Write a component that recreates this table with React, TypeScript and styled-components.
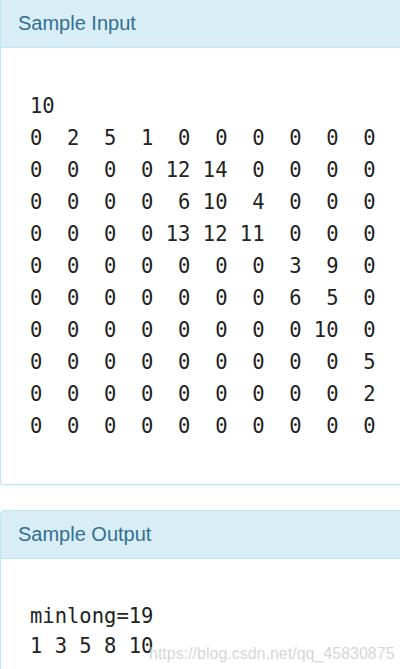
import styled, { createGlobalStyle } from 'styled-components';

const GlobalStyle = createGlobalStyle`
  html, body {
    margin: 0;
    padding: 0;
    background: #fff;
    overflow: hidden;
  }
  body {
    font-family: "Liberation Sans", Arial, sans-serif;
  }
`;

const matrix: number[][] = [
  [0, 2, 5, 1, 0, 0, 0, 0, 0, 0],
  [0, 0, 0, 0, 12, 14, 0, 0, 0, 0],
  [0, 0, 0, 0, 6, 10, 4, 0, 0, 0],
  [0, 0, 0, 0, 13, 12, 11, 0, 0, 0],
  [0, 0, 0, 0, 0, 0, 0, 3, 9, 0],
  [0, 0, 0, 0, 0, 0, 0, 6, 5, 0],
  [0, 0, 0, 0, 0, 0, 0, 0, 10, 0],
  [0, 0, 0, 0, 0, 0, 0, 0, 0, 5],
  [0, 0, 0, 0, 0, 0, 0, 0, 0, 2],
  [0, 0, 0, 0, 0, 0, 0, 0, 0, 0],
];

const formatRow = (row: number[]) =>
  row.map((n, i) => (i === 0 ? String(n) : String(n).padStart(3, ' '))).join('');

const inputLines = ['10', ...matrix.map(formatRow)];
const outputLines = ['minlong=19', '1 3 5 8 10'];

function Panel({
  title,
  lines,
  lh,
  mark,
}: {
  title: string;
  lines: string[];
  lh: number;
  mark?: boolean;
}) {
  return (
    <Card>
      <Heading>{title}</Heading>
      <Body>
        <Code $lh={lh}>{lines.join('\n')}</Code>
        {mark && <Watermark>https://blog.csdn.net/qq_45830875</Watermark>}
      </Body>
    </Card>
  );
}

function App() {
  return (
    <Page>
      <GlobalStyle />
      <Panel title='Sample Input' lines={inputLines} lh={32} />
      <Panel title='Sample Output' lines={outputLines} lh={30} mark />
    </Page>
  );
}

export default App;

const Page = styled.div`
  display: flex;
  flex-direction: column;
  gap: 25px;
  width: 400px;
  height: 100vh;
  overflow: hidden;
`;

const Card = styled.div`
  flex-shrink: 0;
  margin-right: -6px;
  background: #fff;
  border: 1px solid #bce8f1;
  border-top: none;
  border-radius: 0 0 4px 4px;
  box-shadow: 0 1px 1px rgba(0, 0, 0, 0.05);

  & + & {
    border-top: 1px solid #bce8f1;
    border-radius: 4px 4px 0 0;
  }
`;

const Heading = styled.div`
  height: 47px;
  display: flex;
  align-items: center;
  padding-left: 17px;
  background: #d9edf7;
  border-bottom: 1px solid #bce8f1;
  color: #31708f;
  font-size: 20px;
`;

const Body = styled.div`
  position: relative;
  padding: 42px 0 42px 29px;
`;

const Code = styled.pre<{ $lh: number }>`
  margin: 0;
  font-family: "DejaVu Sans Mono", "Liberation Mono", monospace;
  font-size: 20.5px;
  line-height: ${(p) => p.$lh}px;
  color: #222;
`;

const Watermark = styled.span`
  position: absolute;
  left: 148px;
  top: 86px;
  font-family: "Liberation Sans", Arial, sans-serif;
  font-size: 16px;
  color: rgba(200, 200, 200, 0.75);
  white-space: nowrap;
  pointer-events: none;
`;
